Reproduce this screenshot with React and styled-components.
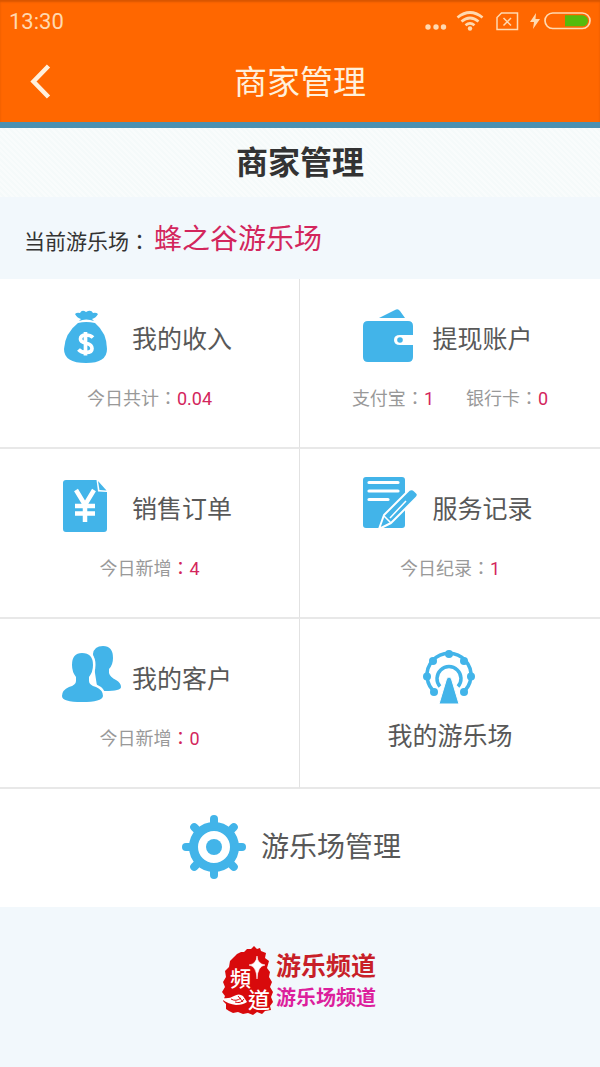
import React from "react";
import styled, { createGlobalStyle } from "styled-components";

const BLUE = "#42b4e9";
const PINK = "#d3265c";

const GlobalStyle = createGlobalStyle`
  * { box-sizing: border-box; }
  body {
    margin: 0;
    background: #f2f8fc;
    font-family: Roboto, "Noto Sans CJK SC", sans-serif;
    color: #333;
  }
  a { color: inherit; text-decoration: none; }
`;

const Page = styled.div`
  display: flex;
  flex-direction: column;
  min-height: 100vh;
`;

const TopBar = styled.header`
  background: #ff6700;
  border-bottom: 6px solid #4b90b1;
  box-shadow: inset 0 2px 2px #d95600;
`;

const StatusBar = styled.div`
  display: flex;
  align-items: center;
  justify-content: space-between;
  height: 42px;
  padding: 0 9px;
  color: #ffd9b0;
  font-size: 22px;
`;

const StatusIcons = styled.div`
  display: flex;
  align-items: center;
  gap: 10px;
`;

const Power = styled.div`
  display: flex;
  align-items: center;
  gap: 4px;
`;

const NavBar = styled.div`
  display: grid;
  grid-template-columns: 80px 1fr 80px;
  align-items: center;
  height: 80px;
`;

const BackButton = styled.button`
  display: flex;
  align-items: center;
  justify-content: center;
  height: 60px;
  padding: 0;
  border: 0;
  background: none;
`;

const NavTitle = styled.div`
  padding-top: 2px;
  color: #fff0dc;
  font-size: 33px;
  line-height: 40px;
  text-align: center;
`;

const TitleBand = styled.div`
  display: flex;
  align-items: center;
  justify-content: center;
  height: 69px;
  background: repeating-linear-gradient(45deg, #f9fcfc 0 2px, #f5fafa 2px 4px);
`;

const Title = styled.h1`
  margin: 0;
  font-size: 32px;
  line-height: 40px;
  font-weight: 700;
`;

const Current = styled.div`
  display: flex;
  align-items: center;
  gap: 4px;
  height: 82px;
  padding: 4px 24px 0;
  font-size: 21px;
`;

const CurrentName = styled.span`
  color: ${PINK};
  font-size: 28px;
  line-height: 36px;
`;

const Colon = styled.span`
  font-family: "Noto Sans CJK TC", sans-serif;
`;

const Grid = styled.nav`
  display: grid;
  grid-template-columns: 1fr 1fr;
  background: #fff;
`;

const Tile = styled.a`
  display: flex;
  flex-direction: column;
  align-items: center;
  height: 170px;
  padding-top: 30px;
  border-bottom: 2px solid #e8e8e8;

  &:nth-child(odd) { border-right: 1px solid #e2e2e2; }
`;

const TileHead = styled.span`
  display: flex;
  align-items: center;
  gap: 10px;
  height: 62px;
  padding-right: 5px;
`;

const Label = styled.span`
  color: #585858;
  font-size: ${(p) => (p.$large ? 28 : 25)}px;
  line-height: 36px;
`;

const Stats = styled.span`
  display: flex;
  gap: 32px;
  margin-top: 14px;
  color: #999;
  font-size: 18px;
  line-height: 24px;
`;

const Value = styled.span`
  color: ${PINK};
`;

const ParkTile = styled(Tile)`
  gap: 10px;
`;

const Manage = styled.a`
  display: flex;
  align-items: center;
  justify-content: center;
  gap: 14px;
  height: 118px;
  padding-right: 18px;
  background: #fff;
`;

const Footer = styled.footer`
  display: flex;
  align-items: flex-start;
  justify-content: center;
  gap: 2px;
  padding: 38px 2px 40px 0;
`;

const Brand = styled.div`
  display: flex;
  flex-direction: column;
  padding-top: 6px;
  font-weight: 700;
`;

const BrandMain = styled.span`
  color: #c81f28;
  font-size: 25px;
  line-height: 32px;
`;

const BrandSub = styled.span`
  color: #dc1f9c;
  font-size: 20px;
  line-height: 30px;
`;

const Icon = styled.svg`
  display: block;
  flex: none;
  overflow: visible;
`;

const TileIcon = ({ children }) => (
  <Icon width="60" height="60" viewBox="0 1 60 60" fill={BLUE} aria-hidden="true">
    {children}
  </Icon>
);

const MoneyBag = () => (
  <TileIcon>
    <path d="M13 5Q15 3 18 4Q20 0 24 3Q29 0 31 4Q34 3 36 5Q34 9 30 10L32 12Q24 9 17 12L19 10Q15 9 13 5Z" />
    <path d="M16 14Q24 12 33 14Q45 24 45 40Q45 54 24 54Q2 54 2 40Q3 24 16 14Z" />
    <path d="M31 28.500Q28.500 26 24 26Q18.500 26 18.500 30Q18.500 33 24 34.200Q30 35.500 30 39.500Q30 43.500 24 43.500Q19 43.500 16.500 40.500M23.500 23V46.500" fill="none" stroke="#fff" strokeWidth="3.700" />
  </TileIcon>
);

const Wallet = () => (
  <TileIcon>
    <path d="M17 9L33 1Q36 -1 38 2L43 9Z" />
    <path d="M6 12H46Q51 12 51 17V26H38Q32 26 32 31Q32 36 38 36H51V48Q51 53 46 53H6Q1 53 1 48V17Q1 12 6 12Z" />
    <circle cx="38" cy="31" r="2.800" />
  </TileIcon>
);

const OrderDoc = () => (
  <TileIcon>
    <path d="M4 1H34.500L36 12.500L45 13V50Q45 53 42 53H4Q1 53 1 50V4Q1 1 4 1Z" />
    <path d="M36 2L44.500 11.500L37.500 11Z" />
    <path d="M14 11L23 26L32 11M23 25V43M13 27H33M13 34.500H33" fill="none" stroke="#fff" strokeWidth="4.500" />
  </TileIcon>
);

const ServiceNote = () => (
  <TileIcon>
    <rect x="1" y="-2" width="42" height="51" rx="3" />
    <path d="M7 3.500H36M7 12H36M7 20.500H26" stroke="#fff" strokeWidth="3.200" strokeLinecap="round" />
    <path d="M17 50L22 36L47 11Q50 9 53 12L55 14Q57 16 54 19L29 44Z" stroke="#fff" strokeWidth="2" strokeLinejoin="round" />
    <path d="M22 37L29 44M28 39L44 22" fill="none" stroke="#fff" strokeWidth="1.500" />
  </TileIcon>
);

const personPath =
  "M20 4Q31 4 31 16Q31 23 27 28V32Q27 36 34 38Q41 41 41 47Q40 53 20 53Q0 53 0 47Q0 41 7 38Q14 36 14 32V28Q10 23 10 16Q10 4 20 4Z";

const Customers = () => (
  <TileIcon>
    <path d="M41 -3Q51 -3 51 9Q51 16 47 20V24Q48 28 54 31Q59 34 59 38Q59 42 43 42Q38 42 35 37Q32 20 31 5Q32 -3 41 -3Z" />
    <path d={personPath} stroke="#fff" strokeWidth="5" />
    <path d={personPath} />
  </TileIcon>
);

const wheelCars = [
  [12, 43], [5, 27.5], [11, 12], [27, 5], [42, 12], [49, 27.5], [42, 43],
];

const FerrisWheel = () => (
  <Icon width="54" height="60" viewBox="1 0 54 60" fill={BLUE} aria-hidden="true">
    <path d="M14 44A22 22 0 1 1 40 44" fill="none" stroke={BLUE} strokeWidth="3.500" />
    <path d="M18 37.500A12 12 0 1 1 36 37.500" fill="none" stroke={BLUE} strokeWidth="3.500" />
    {wheelCars.map(([x, y]) => (
      <circle key={`${x}-${y}`} cx={x} cy={y} r="4" />
    ))}
    <path d="M24.500 30Q27 26 29.500 30L37 55H17Z" stroke="#fff" strokeWidth="1" />
  </Icon>
);

const Gear = () => (
  <Icon width="66" height="66" viewBox="-33 -32 66 66" fill="none" aria-hidden="true">
    <circle r="20.500" stroke={BLUE} strokeWidth="9" />
    <circle r="8" fill={BLUE} />
    {[0, 45, 90, 135, 180, 225, 270, 315].map((a) => (
      <path key={a} d="M0 -22V-28" transform={`rotate(${a})`} stroke={BLUE} strokeWidth="8" strokeLinecap="round" />
    ))}
  </Icon>
);

const Seal = () => (
  <Icon width="52" height="72" viewBox="0 0 50 72" aria-hidden="true">
    <path
      d="M11 12L14 9L18 7L21 7L24 4L28 4L31 1L34 4L37 3L38 6L43 8L42 13L46 16L44 23L47 27L46 32L49 37L47 42L50 47L48 52L50 57L47 61L48 65L42 66L39 69L34 67L30 70L25 68L20 69L15 67L10 68L6 66L3 64L3 59L0 56L2 51L-1 47L2 42L0 37L3 32L2 26L6 22L7 16Z"
      fill="#d80a0c"
    />
    <text x="7" y="41" fontSize="21" fontWeight="500" fill="#fff" fontFamily="'Noto Sans CJK TC', sans-serif">頻</text>
    <text x="25" y="63" fontSize="22" fontWeight="500" fill="#fff" fontFamily="'Noto Sans CJK TC', sans-serif">道</text>
    <path d="M34 11Q34.500 19 42 20Q34.500 21 34 34Q33.500 21 26 20Q33.500 19 34 11Z" fill="#fff" stroke="#fff" strokeWidth=".6" />
    <path d="M0 53Q6 54 11 51Q16 48 20 51L24 57Q20 60 13 60Q5 59 0 55Z" fill="#fff" />
    <path d="M8 54Q13 57 18 53M12 57Q18 59 21 54M15 51L20 57" fill="none" stroke="#d80a0c" strokeWidth="1" />
  </Icon>
);

const Stat = ({ name, value, pinkColon }) => (
  <span>
    {name}
    {pinkColon ? <Value><Colon>：</Colon></Value> : <Colon>：</Colon>}
    <Value>{value}</Value>
  </span>
);

const tiles = [
  { label: "我的收入", icon: MoneyBag, stats: [{ name: "今日共计", value: "0.04" }] },
  { label: "提现账户", icon: Wallet, stats: [{ name: "支付宝", value: "1" }, { name: "银行卡", value: "0" }] },
  { label: "销售订单", icon: OrderDoc, stats: [{ name: "今日新增", value: "4", pinkColon: true }] },
  { label: "服务记录", icon: ServiceNote, stats: [{ name: "今日纪录", value: "1" }] },
  { label: "我的客户", icon: Customers, stats: [{ name: "今日新增", value: "0", pinkColon: true }] },
];

export default function App() {
  return (
    <Page>
      <GlobalStyle />
      <TopBar>
        <StatusBar>
          <span>13:30</span>
          <StatusIcons>
            <Icon width="22" height="20" viewBox="0 0 22 20" fill="#ffd9b0" aria-hidden="true">
              <circle cx="2" cy="16" r="2.700" />
              <circle cx="10" cy="16" r="2.700" />
              <circle cx="17.500" cy="16" r="2.700" />
            </Icon>
            <Icon width="28" height="20" viewBox="2 0 28 20" fill="none" stroke="#ffd9b0" strokeWidth="2.700" aria-hidden="true">
              <path d="M1.500 6.500Q14 -3.500 26.500 6.500M5.500 10.500Q14 3.500 22.500 10.500M9.500 14.200Q14 10.500 18.500 14.200" />
              <circle cx="14" cy="17.500" r="2.200" fill="#ffd9b0" stroke="none" />
            </Icon>
            <Icon width="24" height="20" viewBox="1 0 24 20" fill="none" stroke="#ffd9b0" strokeWidth="1.500" aria-hidden="true">
              <path d="M6.500 2H22.500V18.500H2V6.500ZM8.500 7L16 14.500M16 7L8.500 14.500" />
            </Icon>
            <Power>
              <Icon width="10" height="16" viewBox="0 0 10 16" fill="#ffd9b0" aria-hidden="true">
                <path d="M6 0L0 9H4L3 16L10 6H5.500Z" />
              </Icon>
              <Icon width="47" height="18" viewBox="0 0 47 18" aria-hidden="true">
                <rect x="1" y="1" width="45" height="15.500" rx="7.700" fill="none" stroke="#ffd9b0" strokeWidth="1.700" />
                <path d="M21 3.300H38.500A5.500 5.500 0 0 1 38.500 14.300H21Z" fill="#55bb0c" />
              </Icon>
            </Power>
          </StatusIcons>
        </StatusBar>
        <NavBar>
          <BackButton type="button" aria-label="返回">
            <Icon width="20" height="36" viewBox="0 0 20 36" fill="none" stroke="#fff0dc" strokeWidth="4.500" aria-hidden="true">
              <path d="M18.500 2L3.500 17.500L18.500 33" />
            </Icon>
          </BackButton>
          <NavTitle>商家管理</NavTitle>
        </NavBar>
      </TopBar>
      <main>
        <TitleBand>
          <Title>商家管理</Title>
        </TitleBand>
        <Current>
          <span>当前游乐场<Colon>：</Colon></span>
          <CurrentName>蜂之谷游乐场</CurrentName>
        </Current>
        <Grid>
          {tiles.map(({ label, icon: Glyph, stats }) => (
            <Tile href="#" key={label}>
              <TileHead>
                <Glyph />
                <Label>{label}</Label>
              </TileHead>
              <Stats>
                {stats.map((s) => (
                  <Stat key={s.name} {...s} />
                ))}
              </Stats>
            </Tile>
          ))}
          <ParkTile href="#">
            <FerrisWheel />
            <Label>我的游乐场</Label>
          </ParkTile>
        </Grid>
        <Manage href="#">
          <Gear />
          <Label $large>游乐场管理</Label>
        </Manage>
      </main>
      <Footer>
        <Seal />
        <Brand>
          <BrandMain>游乐频道</BrandMain>
          <BrandSub>游乐场频道</BrandSub>
        </Brand>
      </Footer>
    </Page>
  );
}
